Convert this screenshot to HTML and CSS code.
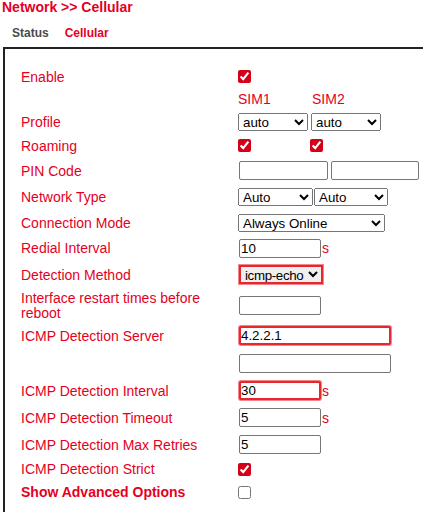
FILE: index.html
```html
<!DOCTYPE html>
<html lang="en">
  <head>
    <meta charset="UTF-8" />
    <meta name="viewport" content="width=device-width, initial-scale=1.0" />
    <title>Network &gt;&gt; Cellular</title>
    <link rel="stylesheet" href="styles.css">
  </head>
  <body>
    <div class="page-title">Network &gt;&gt; Cellular</div>
    <div class="tabs">
      <span class="tab">Status</span>
      <span class="tab active">Cellular</span>
    </div>

    <div class="panel">
      <div class="form">
        <div class="label">Enable</div>
        <div class="field"><input type="checkbox" checked></div>

        <div class="label"></div>
        <div class="field pair">
          <span class="sim">SIM1</span>
          <span class="sim">SIM2</span>
        </div>

        <div class="label">Profile</div>
        <div class="field pair">
          <select class="sel-profile"><option>auto</option></select>
          <select class="sel-profile second"><option>auto</option></select>
        </div>

        <div class="label">Roaming</div>
        <div class="field pair">
          <input type="checkbox" checked>
          <input type="checkbox" checked>
        </div>

        <div class="label">PIN Code</div>
        <div class="field gap2">
          <input type="text" class="txt pin">
          <input type="text" class="txt pin2">
        </div>

        <div class="label">Network Type</div>
        <div class="field gap1">
          <select class="sel-net"><option>Auto</option></select>
          <select class="sel-net2"><option>Auto</option></select>
        </div>

        <div class="label">Connection Mode</div>
        <div class="field">
          <select class="sel-mode"><option>Always Online</option></select>
        </div>

        <div class="label">Redial Interval</div>
        <div class="field">
          <input type="text" class="txt short" value="10"><span class="unit">s</span>
        </div>

        <div class="label">Detection Method</div>
        <div class="field">
          <select class="sel-detect marked"><option>icmp-echo</option></select>
        </div>

        <div class="label">Interface restart times before reboot</div>
        <div class="field">
          <input type="text" class="txt short">
        </div>

        <div class="label">ICMP Detection Server</div>
        <div class="field">
          <input type="text" class="txt long marked" value="4.2.2.1">
        </div>

        <div class="label"></div>
        <div class="field">
          <input type="text" class="txt long">
        </div>

        <div class="label">ICMP Detection Interval</div>
        <div class="field">
          <input type="text" class="txt short marked" value="30"><span class="unit">s</span>
        </div>

        <div class="label">ICMP Detection Timeout</div>
        <div class="field">
          <input type="text" class="txt short" value="5"><span class="unit">s</span>
        </div>

        <div class="label">ICMP Detection Max Retries</div>
        <div class="field">
          <input type="text" class="txt short" value="5">
        </div>

        <div class="label">ICMP Detection Strict</div>
        <div class="field"><input type="checkbox" checked></div>

        <div class="label bold">Show Advanced Options</div>
        <div class="field"><input type="checkbox"></div>
      </div>
    </div>
  </body>
</html>
```

FILE: styles.css
```css
html,
body {
  margin: 0;
  overflow: hidden;
  background: #fff;
  font-family: "Liberation Sans", Arial, sans-serif;
}

/* Header */
.page-title {
  padding-left: 2px;
  font-size: 14px;
  font-weight: bold;
  line-height: 14px;
  color: #e5001e;
}

.tabs {
  display: flex;
  gap: 16px;
  margin: 12px 0 0 12px;
  font-size: 12px;
  font-weight: bold;
  line-height: 14px;
  color: #4a4a4a;
}

.tab.active {
  color: #e5001e;
}

/* Bordered settings panel, open on the right and bottom */
.panel {
  margin: 7px 0 0 3px;
  width: calc(100% - 3px);
  height: 465px;
  overflow: hidden;
  border-top: 2px solid #222;
  border-left: 2px solid #222;
  padding: 16px 0 0 16px;
  box-sizing: border-box;
}

.form {
  display: grid;
  grid-template-columns: 217px 1fr;
  grid-template-rows: 23px 22px 24px 23px 27px 26px 25px 26px 27px 34px 27px 28px 27px 27px 27px 22px 24px;
}

.label {
  align-self: center;
  padding: 1px 4px 0 0;
  font-size: 14px;
  line-height: 15px;
  color: #e5001e;
}

.label.bold {
  font-weight: bold;
}

.field {
  display: flex;
  align-items: center;
}

.field.pair {
  display: grid;
  grid-template-columns: 72px 72px;
  align-items: center;
}

.field.gap1 {
  gap: 1px;
}

.field.gap2 {
  gap: 2px;
}

.sim {
  font-size: 14px;
  color: #e5001e;
}

.sim + .sim {
  padding-left: 2px;
}

.unit {
  margin-left: 1px;
  font-size: 14px;
  color: #e5001e;
}

/* Controls */
input[type="checkbox"] {
  width: 13px;
  height: 13px;
  margin: 0;
  accent-color: #d4001a;
}

.txt {
  height: 19px;
  margin: 0 0 0 1px;
  padding: 0 1px;
  box-sizing: border-box;
  border: 1px solid #767676;
  border-radius: 2px;
  font-family: "Liberation Sans", Arial, sans-serif;
  font-size: 13.33px;
  color: #000;
}

.txt.short {
  width: 82px;
}

.txt.long {
  width: 152px;
}

.txt.pin {
  width: 89px;
}

.txt.pin2 {
  width: 88px;
}

select {
  height: 18px;
  margin: 0;
  font-family: "Liberation Sans", Arial, sans-serif;
  font-size: 13.33px;
  color: #000;
}

.sel-profile {
  width: 70px;
}

.sel-profile.second {
  margin-left: 1px;
}

.sel-net {
  width: 75px;
}

.sel-net2 {
  width: 74px;
}

.sel-mode {
  width: 147px;
}

.sel-detect {
  width: 84px;
  height: 19px;
  margin-left: 1px;
  padding: 0;
  letter-spacing: -0.35px;
}

/* Fields flagged red */
.marked {
  border: 2px solid #e8262d;
  box-shadow: 0 0 0 1px rgba(232, 38, 45, 0.55);
}

.txt.marked {
  padding: 0;
}
```
